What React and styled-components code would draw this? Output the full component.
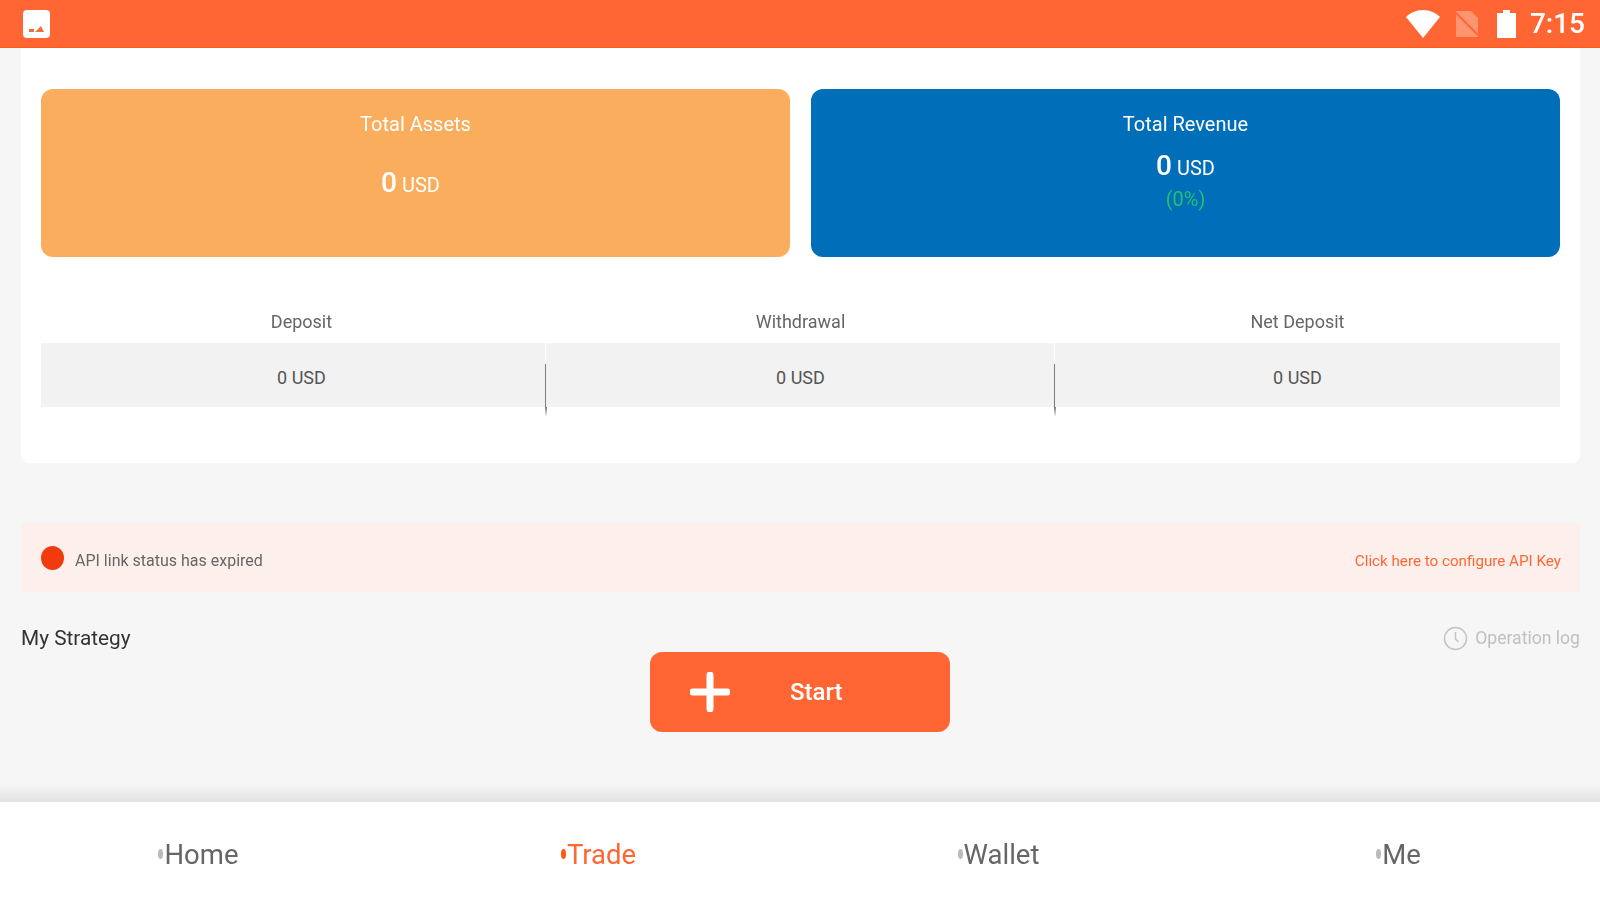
import React from 'react';
import styled, { createGlobalStyle } from 'styled-components';

const GlobalStyle = createGlobalStyle`
  html, body {
    margin: 0;
    padding: 0;
    background: #f6f6f6;
    font-family: Roboto, "Liberation Sans", sans-serif;
  }
`;

const tabs = [
  { label: 'Home' },
  { label: 'Trade', active: true },
  { label: 'Wallet' },
  { label: 'Me' },
];

const stats = [
  { label: 'Deposit', value: '0 USD' },
  { label: 'Withdrawal', value: '0 USD' },
  { label: 'Net Deposit', value: '0 USD' },
];

const App = () => {
  return (
    <Page>
      <GlobalStyle />
      <StatusBar>
        <AppIcon viewBox="0 0 27 28">
          <rect width="27" height="28" rx="4" fill="#fff" />
          <path d="M6 22h5v-3H6zM12 22h9l-3-6-3 3z" fill="#f0703c" />
        </AppIcon>
        <StatusRight>
          <svg width="34" height="28" viewBox="0 0 34 28">
            <path d="M0 7C4 3 10 0 17 0s13 3 17 7L17 28z" fill="#fff" />
          </svg>
          <SimIcon width="26" height="26" viewBox="0 0 26 26">
            <path d="M2 0h15l7 7v19H2z" fill="#fff" fillOpacity=".3" />
            <path d="M2 2l22 22" stroke="#ff6633" strokeWidth="2" />
          </SimIcon>
          <BatteryIcon width="19" height="28" viewBox="0 0 19 28">
            <path d="M6 0h7v3h6v25H0V3h6z" fill="#fff" />
          </BatteryIcon>
          <Clock>7:15</Clock>
        </StatusRight>
      </StatusBar>

      <Main>
        <Panel>
          <Cards>
            <Card $color="#fbad5e">
              <CardTitle>Total Assets</CardTitle>
              <CardValue $top={32} $shift={10}>
                <b>0</b> USD
              </CardValue>
            </Card>
            <Card $color="#006eb8">
              <CardTitle>Total Revenue</CardTitle>
              <CardValue $top={15}>
                <b>0</b> USD
              </CardValue>
              <Percent>(0%)</Percent>
            </Card>
          </Cards>
          <StatHeads>
            {stats.map((s) => (
              <StatCell key={s.label}>{s.label}</StatCell>
            ))}
          </StatHeads>
          <StatValues>
            {stats.map((s) => (
              <StatValue key={s.label}>{s.value}</StatValue>
            ))}
          </StatValues>
        </Panel>

        <Alert>
          <AlertLeft>
            <Dot />
            <span>API link status has expired</span>
          </AlertLeft>
          <AlertLink>Click here to configure API Key</AlertLink>
        </Alert>

        <StrategyRow>
          <StrategyTitle>My Strategy</StrategyTitle>
          <LogLink>
            <svg width="25" height="25" viewBox="0 0 25 25" fill="none" stroke="#c4c4c4" strokeWidth="1.5">
              <circle cx="12.5" cy="12.5" r="11" />
              <path d="M12.5 6v7l3 3" />
            </svg>
            Operation log
          </LogLink>
        </StrategyRow>

        <StartButton>
          <svg width="40" height="40" viewBox="0 0 40 40">
            <path d="M20 3v34M3 20h34" stroke="#fff" strokeWidth="7" strokeLinecap="round" />
          </svg>
          Start
        </StartButton>
      </Main>

      <Nav>
        {tabs.map((t) => (
          <Tab key={t.label} $active={t.active}>
            <TabMark $active={t.active} />
            {t.label}
          </Tab>
        ))}
      </Nav>
    </Page>
  );
};

export default App;

const Page = styled.div`
  display: flex;
  flex-direction: column;
  width: 1600px;
  height: 900px;
  overflow: hidden;
  background: #f6f6f6;
`;

const StatusBar = styled.div`
  display: flex;
  align-items: center;
  justify-content: space-between;
  box-sizing: border-box;
  flex: none;
  height: 48px;
  padding: 0 15px 0 23px;
  background: #ff6633;
  border-bottom: 1px solid #ff5a14;
`;

const AppIcon = styled.svg`
  width: 27px;
  height: 28px;
  filter: blur(0.6px);
`;

const StatusRight = styled.div`
  display: flex;
  align-items: center;
  filter: blur(0.6px);
`;

const SimIcon = styled.svg`
  margin-left: 14px;
`;

const BatteryIcon = styled.svg`
  margin-left: 17px;
`;

const Clock = styled.span`
  margin-left: 14px;
  color: #fff;
  font-size: 28px;
  font-weight: 500;
`;

const Main = styled.div`
  display: flex;
  flex-direction: column;
  flex: 1;
  padding: 0 20px 0 21px;
  filter: blur(0.6px);
`;

const Panel = styled.div`
  box-sizing: border-box;
  height: 415px;
  padding: 41px 20px 0;
  background: #fff;
  border-radius: 0 0 8px 8px;
`;

const Cards = styled.div`
  display: grid;
  grid-template-columns: 1fr 1fr;
  gap: 21px;
`;

const Card = styled.div`
  display: flex;
  flex-direction: column;
  align-items: center;
  box-sizing: border-box;
  height: 168px;
  padding-top: 23px;
  color: #fff;
  background: ${(p) => p.$color};
  border-radius: 12px;
`;

const CardTitle = styled.div`
  font-size: 20px;
  line-height: 24px;
`;

const CardValue = styled.div`
  margin-top: ${(p) => p.$top}px;
  margin-right: ${(p) => p.$shift || 0}px;
  font-size: 20px;
  line-height: 30px;

  b {
    font-size: 28px;
    font-weight: 500;
  }
`;

const Percent = styled.div`
  margin-top: 5px;
  color: #1fc06f;
  font-size: 20px;
  line-height: 22px;
`;

const StatHeads = styled.div`
  display: grid;
  grid-template-columns: 505px 1fr 505px;
  margin-top: 54px;
`;

const StatCell = styled.div`
  color: #666;
  font-size: 18px;
  line-height: 22px;
  text-align: center;

  &:first-child {
    padding-left: 16px;
  }

  &:last-child {
    padding-right: 20px;
  }
`;

const StatValues = styled.div`
  display: grid;
  grid-template-columns: 505px 1fr 505px;
  margin-top: 10px;
`;

const StatValue = styled(StatCell)`
  position: relative;
  height: 64px;
  color: #555;
  line-height: 70px;
  background: #f2f2f2;

  &:not(:last-child)::after {
    content: '';
    position: absolute;
    top: 0;
    right: -1px;
    width: 2px;
    height: 74px;
    background: linear-gradient(#fff 0, #fff 21px, #7a7a7a 21px, #7a7a7a 64px, rgba(122, 122, 122, 0) 74px);
  }
`;

const Alert = styled.div`
  display: flex;
  align-items: center;
  justify-content: space-between;
  box-sizing: border-box;
  height: 69px;
  margin-top: 60px;
  padding: 6px 19px 0 20px;
  background: #fdf0ec;
`;

const AlertLeft = styled.div`
  display: flex;
  align-items: center;
  color: #666;
  font-size: 16px;
`;

const Dot = styled.div`
  width: 23px;
  height: 24px;
  margin: -6px 11px 0 0;
  background: #f23a0f;
  border-radius: 50%;
`;

const AlertLink = styled.div`
  color: #ff6633;
  font-size: 15.2px;
`;

const StrategyRow = styled.div`
  display: flex;
  align-items: center;
  justify-content: space-between;
  height: 26px;
  margin-top: 33px;
`;

const StrategyTitle = styled.div`
  color: #333;
  font-size: 20.8px;
`;

const LogLink = styled.div`
  display: flex;
  align-items: center;
  gap: 7px;
  color: #c0c0c0;
  font-size: 17.6px;
`;

const StartButton = styled.div`
  display: flex;
  align-items: center;
  align-self: center;
  gap: 60px;
  box-sizing: border-box;
  width: 300px;
  height: 80px;
  margin: 1px 1px 0 0;
  padding-left: 40px;
  color: #fff;
  font-size: 24px;
  font-weight: 500;
  background: #ff6633;
  border-radius: 12px;
`;

const Nav = styled.div`
  position: relative;
  display: grid;
  grid-template-columns: repeat(4, 1fr);
  flex: none;
  height: 98px;
  background: #fff;

  &::before {
    content: '';
    position: absolute;
    top: -18px;
    left: 0;
    right: 0;
    height: 18px;
    background: linear-gradient(rgba(0, 0, 0, 0), rgba(0, 0, 0, 0.08));
  }
`;

const Tab = styled.div`
  display: flex;
  align-items: center;
  justify-content: center;
  padding: 6px 3px 0 0;
  color: ${(p) => (p.$active ? '#ff6633' : '#666')};
  font-size: 27.5px;
  filter: blur(0.6px);
`;

const TabMark = styled.span`
  width: 5px;
  height: 10px;
  margin-right: 1px;
  background: ${(p) => (p.$active ? '#ff5a14' : '#bbb')};
  border-radius: 50%;
`;
